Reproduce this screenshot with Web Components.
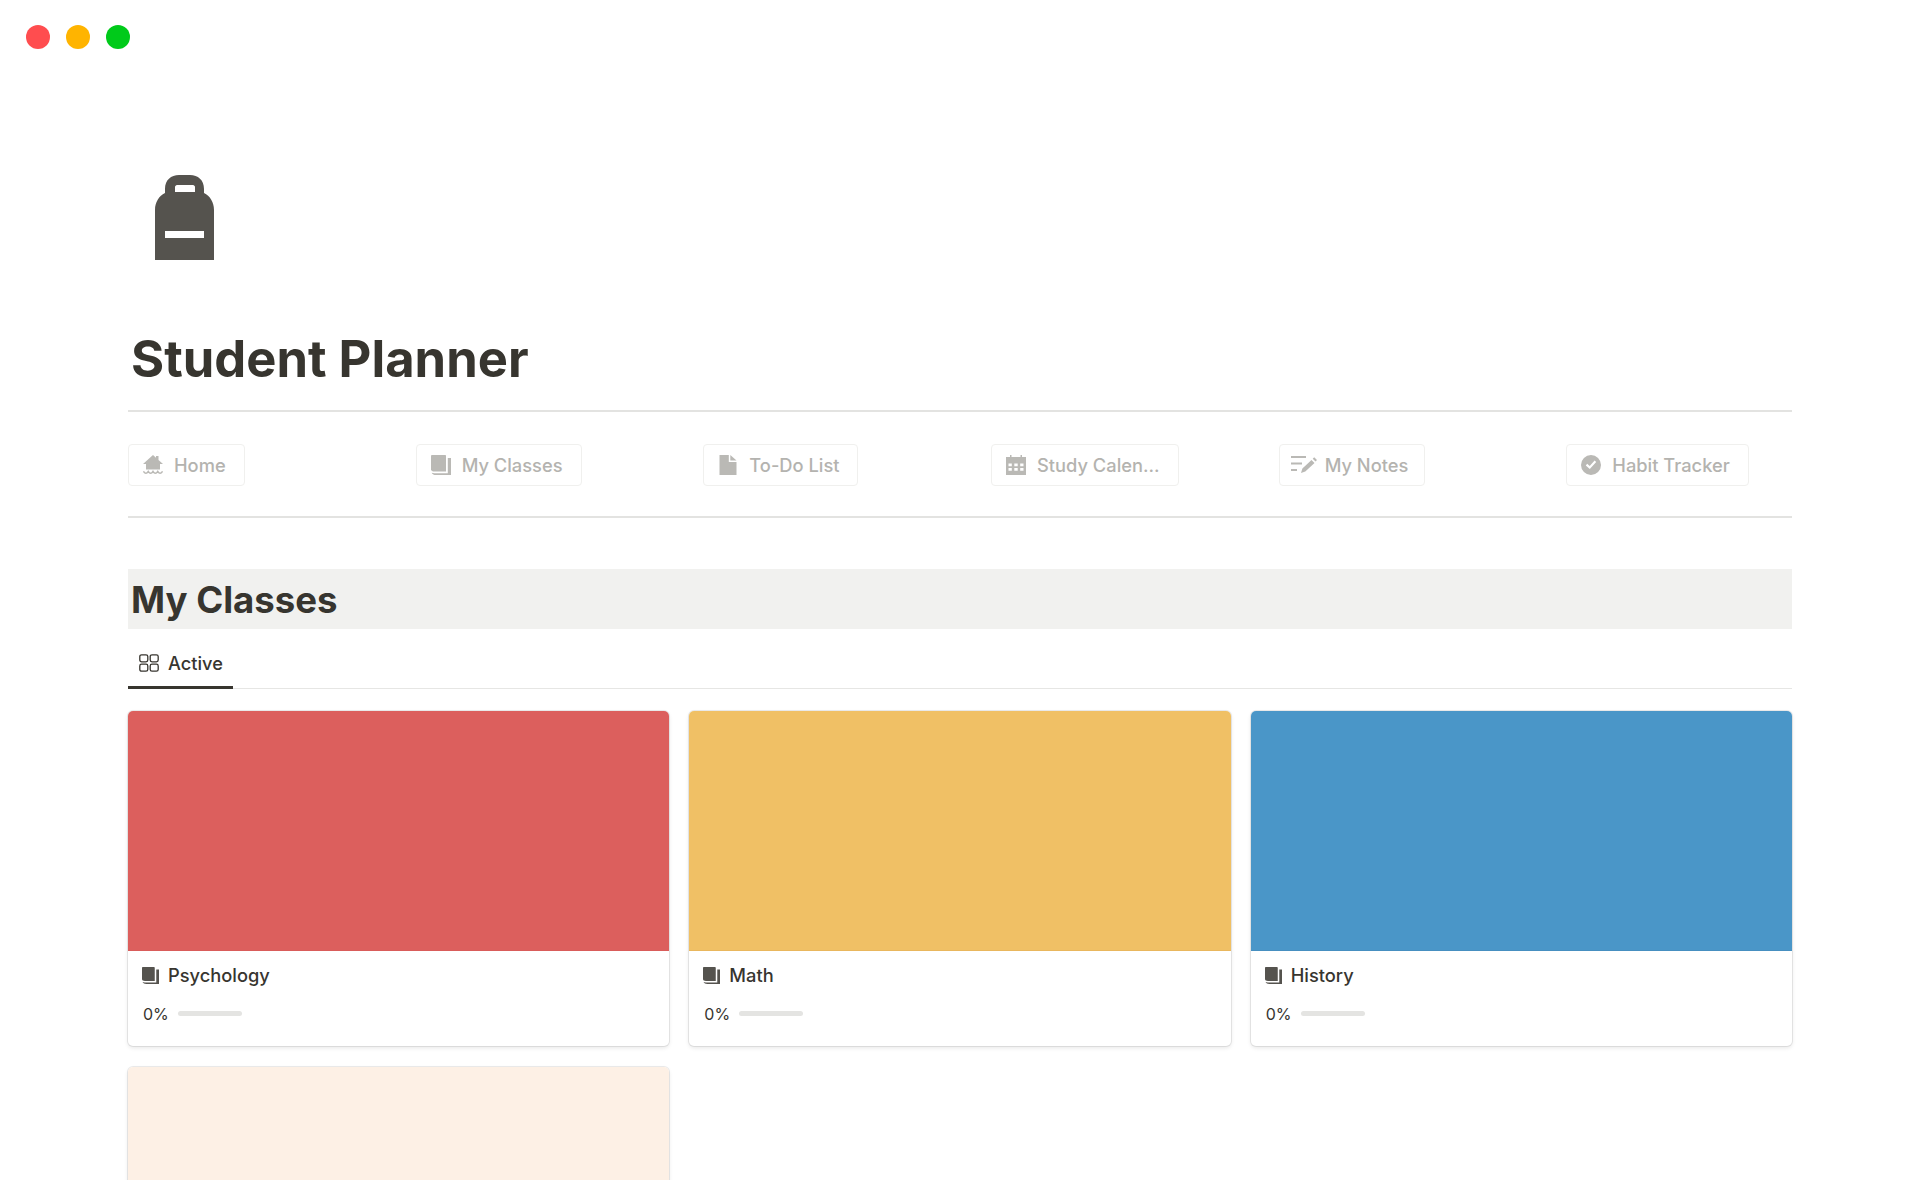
<!DOCTYPE html>
<html>
<head>
<meta charset="utf-8">
<title>Student Planner</title>
<style>
  html, body { margin: 0; background: #fff; }
  body { font-family: Inter, "Liberation Sans", sans-serif; color: #37352f; overflow: hidden; }
</style>
</head>
<body>
<template id="icons">
  <svg data-icon="books" viewBox="0 0 20 20"><path d="M1.200 0H14c.6 0 1 .4 1 1v15.500H3.400C1.500 16.500 0 15.800 0 14.200V1.200C0 .5.500 0 1.200 0z"/><path d="M16.800 3H20v17H5c-2 0-3.600-.8-4.400-2.300.8.300 1.800.5 2.800.5h13.400z"/></svg>
  <svg data-icon="home" viewBox="0 0 20 20"><path d="M10 0l3 2.700V1h2.500v3.900L20 9h-3v5.500H3V9H0z"/><path d="M.5 16.300c1.600 2.500 3.200 2.500 4.750 0 1.550 2.500 3.200 2.500 4.750 0 1.550 2.500 3.200 2.500 4.750 0 1.550 2.500 3.150 2.500 4.750 0" fill="none" stroke="currentColor" stroke-width="1.500"/></svg>
  <svg data-icon="page" viewBox="0 0 20 20"><path d="M1.500 0h9.300v7h7.700v13h-17z"/><path d="M12.300 0l6.200 5.500h-6.200z"/></svg>
  <svg data-icon="calendar" viewBox="0 0 20 20"><path fill-rule="evenodd" d="M4 0h1.500v2h9V0H16v2h4v18H0V2h4zM2.500 8.500v2.700h3.300V8.500zm5.800 0v2.700h3.400V8.500zm5.900 0v2.700h3.300V8.500zM2.500 13v2.700h3.300V13zm5.800 0v2.700h3.400V13zm5.900 0v2.700h3.300V13z"/></svg>
  <svg data-icon="notes" viewBox="0 0 26 20"><path d="M0 1h15v2H0zM0 7.500h11v2H0zM0 14h6v2H0z"/><path d="M10 18l1.400-4.400L20.500 5l3 3-9.200 8.600zM21.700 3.800L23.200 2.300 26 5l-1.500 1.600z"/></svg>
  <svg data-icon="check" viewBox="0 0 20 20"><path fill-rule="evenodd" d="M10 0a10 10 0 1 1 0 20 10 10 0 0 1 0-20zm5.200 7l-1.600-1.400-4.900 5.400-2.500-2.200-1.400 1.600 4 3.600z"/></svg>
  <svg data-icon="gallery" viewBox="0 0 20 20"><g fill="none" stroke="currentColor" stroke-width="1.300"><rect x=".8" y="1.800" width="8" height="7" rx="1.800"/><rect x="11.200" y="1.800" width="8" height="7" rx="1.800"/><rect x=".8" y="11.200" width="8" height="7" rx="1.800"/><rect x="11.200" y="11.200" width="8" height="7" rx="1.800"/></g></svg>
</template>

<planner-page>
  <nav-link slot="nav" icon="home" label="Home"></nav-link>
  <nav-link slot="nav" icon="books" label="My Classes"></nav-link>
  <nav-link slot="nav" icon="page" label="To-Do List"></nav-link>
  <nav-link slot="nav" icon="calendar" label="Study Calen..."></nav-link>
  <nav-link slot="nav" icon="notes" label="My Notes" wide></nav-link>
  <nav-link slot="nav" icon="check" label="Habit Tracker"></nav-link>

  <class-card slot="cards" name="Psychology" cover="#dc5f5d" line="#d95c5a" progress="0%"></class-card>
  <class-card slot="cards" name="Math" cover="#f0c065" line="#e9b75d" progress="0%"></class-card>
  <class-card slot="cards" name="History" cover="#4a96c8" line="#468fc0" progress="0%"></class-card>
  <class-card slot="cards" cover="#fdf0e5" line="#f7e9dd" blank></class-card>
</planner-page>

<script>
  function iconMarkup(name) {
    const tpl = document.getElementById('icons');
    return tpl.content.querySelector('[data-icon="' + name + '"]').outerHTML;
  }

  class PlannerPage extends HTMLElement {
    constructor() {
      super();
      this.attachShadow({ mode: 'open' });
      this.shadowRoot.innerHTML = `
        <style>
          :host { display: block; height: 1180px; overflow: hidden; background: #fff; }
          .dots { display: flex; gap: 16px; padding: 25px 0 0 26px; }
          .dots span { width: 24px; height: 24px; border-radius: 50%; }
          .content { padding: 0 128px; }
          .bag { display: block; width: 59px; height: 85px; margin: 126px 0 0 26.500px; color: #55534e; }
          h1 { margin: 69px 0 0; padding: 0 0 0 3px; font-size: 50.700px; line-height: 60px; font-weight: 700; color: #37352f; }
          .rule { height: 2px; background: #e3e3e1; }
          .title-rule { margin-top: 21px; }
          .nav { display: grid; grid-template-columns: repeat(6, 1fr); column-gap: 62px; padding: 32px 0 30px; justify-items: start; }
          h2 { margin: 51px 0 0; padding: 0 0 0 3px; height: 60px; line-height: 62px; font-size: 36.600px; font-weight: 700; background: #f1f1ef; color: #37352f; }
          .tabs { display: flex; height: 60px; border-bottom: 1px solid #e6e6e4; box-sizing: border-box; }
          .tab { display: flex; align-items: center; gap: 9px; width: 105px; height: 60px; box-sizing: border-box; padding: 10px 0 0 11px; border-bottom: 3px solid #37352f; font-size: 18.200px; font-weight: 500; }
          .tab svg { width: 20px; height: 20px; color: #37352f; }
          .cards { display: grid; grid-template-columns: repeat(3, 1fr); column-gap: 20px; row-gap: 21px; margin-top: 22px; }
        </style>
        <div class="dots">
          <span style="background:#ff4d4f"></span><span style="background:#ffb400"></span><span style="background:#00ca1a"></span>
        </div>
        <div class="content">
          <svg class="bag" viewBox="0 0 59 85" fill="currentColor"><path fill-rule="evenodd" d="M0 85V35C0 27 4 21 10 18V14C10 5 16 0 24 0H35C43 0 49 5 49 14V18C55 21 59 27 59 35V85zM20 12V17H40V12C40 11 39 10 38 10H22C21 10 20 11 20 12zM10 56V63H49V56z"/></svg>
          <h1>Student Planner</h1>
          <div class="rule title-rule"></div>
          <div class="nav"><slot name="nav"></slot></div>
          <div class="rule"></div>
          <h2>My Classes</h2>
          <div class="tabs"><div class="tab">${iconMarkup('gallery')}<span>Active</span></div></div>
          <div class="cards"><slot name="cards"></slot></div>
        </div>
      `;
    }
  }

  class NavLink extends HTMLElement {
    constructor() {
      super();
      this.attachShadow({ mode: 'open' });
    }
    connectedCallback() {
      const wide = this.hasAttribute('wide');
      this.shadowRoot.innerHTML = `
        <style>
          :host { display: inline-flex; }
          a { display: flex; align-items: center; gap: ${wide ? 8 : 11}px; height: 42px; box-sizing: border-box; padding: 0 ${wide ? 16 : 18}px 0 ${wide ? 11 : 14}px; border: 1px solid #f0f0ee; border-radius: 4px; color: #b4b3af; font-size: 18.300px; font-weight: 500; white-space: nowrap; }
          svg { width: ${wide ? 26 : 20}px; height: 20px; fill: #bab9b5; color: #bab9b5; flex: none; }
        </style>
        <a>${iconMarkup(this.getAttribute('icon'))}<span>${this.getAttribute('label')}</span></a>
      `;
    }
  }

  class ClassCard extends HTMLElement {
    constructor() {
      super();
      this.attachShadow({ mode: 'open' });
    }
    connectedCallback() {
      const cover = this.getAttribute('cover');
      const line = this.getAttribute('line');
      const body = this.hasAttribute('blank') ? '' : `
        <div class="body">
          <div class="name">${iconMarkup('books')}<span>${this.getAttribute('name')}</span></div>
          <div class="progress"><span>${this.getAttribute('progress')}</span><i></i></div>
        </div>`;
      this.shadowRoot.innerHTML = `
        <style>
          :host { display: block; }
          .card { height: 335px; border-radius: 5px; overflow: hidden; background: #fff; box-shadow: 0 0 0 1px rgba(15,15,15,.08), 0 2px 4px rgba(15,15,15,.1); }
          .cover { height: 240px; background: ${cover}; border-bottom: 1px solid ${line}; box-sizing: border-box; }
          .body { padding: 12px 14px 0; }
          .name { display: flex; align-items: center; gap: 9px; height: 24px; font-size: 18.300px; font-weight: 500; color: #37352f; }
          .name svg { width: 17px; height: 17px; fill: #55534e; }
          .progress { display: flex; align-items: center; margin-top: 16px; height: 22px; font-size: 16px; font-weight: 400; color: #37352f; }
          .progress span { width: 36px; padding-left: 1px; box-sizing: border-box; }
          .progress i { display: block; width: 64px; height: 5px; border-radius: 3px; background: #e4e4e2; margin-top: -1px; }
        </style>
        <div class="card">
          <div class="cover"></div>
          ${body}
        </div>
      `;
    }
  }

  customElements.define('nav-link', NavLink);
  customElements.define('class-card', ClassCard);
  customElements.define('planner-page', PlannerPage);
</script>
</body>
</html>
